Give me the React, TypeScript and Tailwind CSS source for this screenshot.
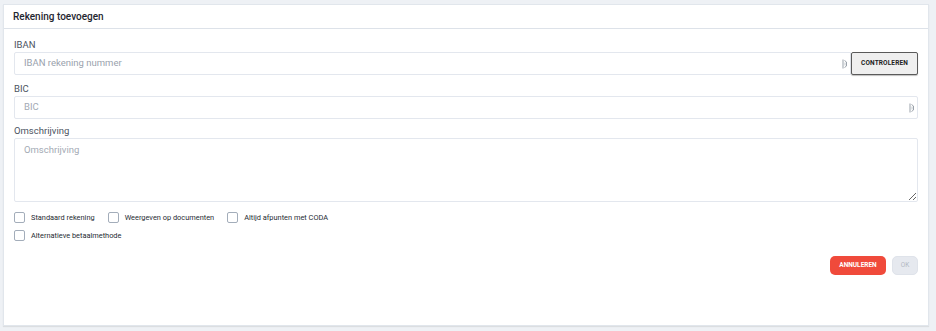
import type { ReactNode } from "react";

const font = { fontFamily: "Roboto, 'Liberation Sans', sans-serif" };

function FillIcon() {
  return (
    <svg width="6" height="10" viewBox="0 0 6 10" className="shrink-0">
      <rect x="0.5" y="0.5" width="1" height="9" fill="#9aa1aa" />
      <path d="M2.5 1.5 L4.5 3 L4.5 7 L2.5 8.5" fill="none" stroke="#9aa1aa" strokeWidth="1" />
      <rect x="2.5" y="3.5" width="1" height="3" fill="#c4c9cf" />
    </svg>
  );
}

function Checkbox({ label }: { label: string }) {
  return (
    <label className="flex items-center gap-[6px]">
      <span className="h-[11px] w-[11px] rounded-[2px] border border-[#a3adba] bg-white" />
      <span className="text-[7.4px] text-[#262b33]">{label}</span>
    </label>
  );
}

function Field({ label, children, className }: { label: string; children: ReactNode; className?: string }) {
  return (
    <div className={className}>
      <div className="mb-[1px] text-[9.5px] leading-[12px] text-[#4b5361]">{label}</div>
      {children}
    </div>
  );
}

export default function App() {
  return (
    <div style={font} className="h-[331px] w-[936px] bg-[#eef1f5] pb-[5px] pl-[3px] pr-[7px] pt-[4px]">
      <div className="flex h-full flex-col border border-[#e1e6ec] bg-white shadow-[0_1px_1px_rgba(0,0,0,0.08)]">
        <div className="flex h-[24px] shrink-0 items-center border-b border-[#dde2e9] pl-[9px]">
          <span className="text-[10px] font-medium text-[#1f2630]">Rekening toevoegen</span>
        </div>

        <div className="flex flex-col px-[10px] pt-[10px]">
          <Field label="IBAN">
            <div className="flex h-[23px]">
              <div className="flex flex-1 items-center rounded-l-[2px] border border-[#e3e7ee] pl-[9px] pr-[2px]">
                <span className="flex-1 text-[9.5px] text-[#9aa2ad]">IBAN rekening nummer</span>
                <FillIcon />
              </div>
              <button
                type="button"
                className="w-[67px] rounded-[2px] border border-[#5a5a5a] bg-[#efefef] text-[6.5px] font-bold tracking-[0.02em] text-[#222] shadow-[0_1px_1px_rgba(0,0,0,0.25)]"
              >
                CONTROLEREN
              </button>
            </div>
          </Field>

          <Field label="BIC" className="mt-[8px]">
            <div className="flex h-[23px] items-center rounded-[2px] border border-[#e3e7ee] pl-[9px] pr-[2px]">
              <span className="flex-1 text-[9.5px] text-[#a3aab4]">BIC</span>
              <FillIcon />
            </div>
          </Field>

          <Field label="Omschrijving" className="mt-[6px]">
            <textarea
              placeholder="Omschrijving"
              className="block h-[64px] w-full resize-y rounded-[2px] border border-[#e3e7ee] px-[9px] py-[4px] text-[9.5px] text-[#333] outline-none placeholder:text-[#a3aab4]"
            />
          </Field>

          <div className="mt-[10px] flex items-center gap-[13px]">
            <Checkbox label="Standaard rekening" />
            <Checkbox label="Weergeven op documenten" />
            <Checkbox label="Altijd afpunten met CODA" />
          </div>
          <div className="mt-[7px] flex items-center">
            <Checkbox label="Alternatieve betaalmethode" />
          </div>

          <div className="mt-[15px] flex justify-end gap-[6px]">
            <button
              type="button"
              className="h-[19px] w-[56px] rounded-[5px] bg-[#f04a3b] text-[6.5px] font-bold text-white"
            >
              ANNULEREN
            </button>
            <button
              type="button"
              className="h-[19px] w-[26px] rounded-[5px] border border-[#dfe3ea] bg-[#e6e9ef] text-[6.5px] text-[#b3b9c3]"
            >
              OK
            </button>
          </div>
        </div>
      </div>
    </div>
  );
}
